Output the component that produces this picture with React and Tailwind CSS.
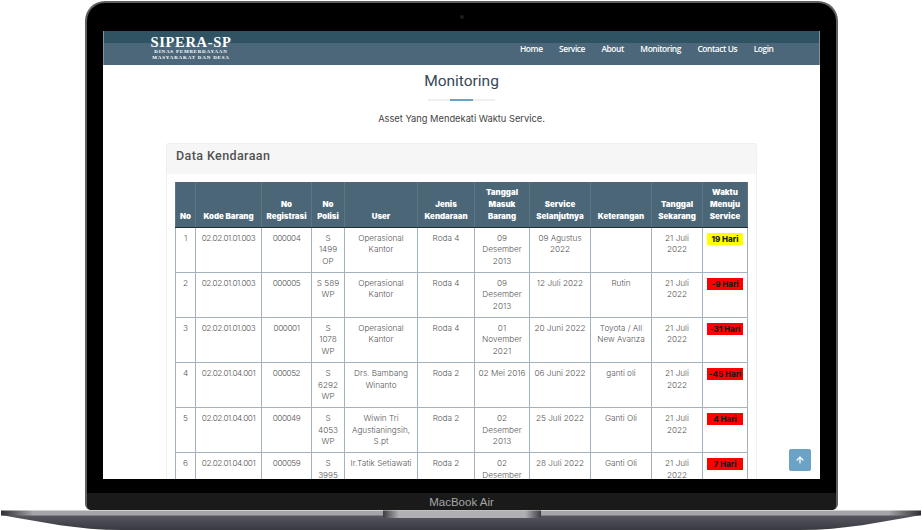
import React from 'react';
import { ArrowUp } from 'lucide-react';

const columns = [
  { label: ['No'], width: 'w-[20px]' },
  { label: ['Kode Barang'], width: 'w-[66px]' },
  { label: ['No', 'Registrasi'], width: 'w-[50px]' },
  { label: ['No', 'Polisi'], width: 'w-[33px]' },
  { label: ['User'], width: 'w-[73px]' },
  { label: ['Jenis', 'Kendaraan'], width: 'w-[57px]' },
  { label: ['Tanggal', 'Masuk', 'Barang'], width: 'w-[55px]' },
  { label: ['Service', 'Selanjutnya'], width: 'w-[61px]' },
  { label: ['Keterangan'], width: 'w-[61px]' },
  { label: ['Tanggal', 'Sekarang'], width: 'w-[51px]' },
  { label: ['Waktu', 'Menuju', 'Service'], width: 'w-[45px]' },
];

const rows = [
  ['1', '02.02.01.01.003', '000004', ['S', '1499', 'OP'], ['Operasional', 'Kantor'], 'Roda 4', ['09', 'Desember', '2013'], ['09 Agustus', '2022'], [''], '19 Hari'],
  ['2', '02.02.01.01.003', '000005', ['S 589', 'WP'], ['Operasional', 'Kantor'], 'Roda 4', ['09', 'Desember', '2013'], ['12 Juli 2022'], ['Rutin'], '-9 Hari'],
  ['3', '02.02.01.01.003', '000001', ['S', '1078', 'WP'], ['Operasional', 'Kantor'], 'Roda 4', ['01', 'November', '2021'], ['20 Juni 2022'], ['Toyota / All', 'New Avanza'], '-31 Hari'],
  ['4', '02.02.01.04.001', '000052', ['S', '6292', 'WP'], ['Drs. Bambang', 'Winanto'], 'Roda 2', ['02 Mei 2016'], ['06 Juni 2022'], ['ganti oli'], '-45 Hari'],
  ['5', '02.02.01.04.001', '000049', ['S', '4053', 'WP'], ['Wiwin Tri', 'Agustianingsih,', 'S.pt'], 'Roda 2', ['02', 'Desember', '2013'], ['25 Juli 2022'], ['Ganti Oli'], '4 Hari'],
  ['6', '02.02.01.04.001', '000059', ['S', '3995', 'WP'], ['Ir.Tatik Setiawati'], 'Roda 2', ['02', 'Desember', '2013'], ['28 Juli 2022'], ['Ganti Oli'], '7 Hari'],
];

const navItems = ['Home', 'Service', 'About', 'Monitoring', 'Contact Us', 'Login'];

const Lines = ({ items }) => items.map((line, i) => <div key={i} className="whitespace-nowrap">{line}</div>);

const Cell = ({ children, tight }) => (
  <td className={`border border-[#a3b3bf] px-0 pt-[5px] pb-[4px] align-top text-center ${tight ? 'tracking-[-0.45px]' : ''}`}>{children}</td>
);

const Badge = ({ text }) => (
  <span className={`inline-block w-[36px] h-[12px] leading-[12px] font-extrabold text-[8px] text-[#1a1a1a] whitespace-nowrap ${text === '19 Hari' ? 'bg-[#ffff00]' : 'bg-[#ff0000]'}`}>
    {text}
  </span>
);

const DataTable = () => (
  <table className="table-fixed border-collapse w-[572px] font-['Inter',sans-serif] font-light text-[8.2px] leading-[11.7px] text-[#555]">
    <thead>
      <tr className="h-[45px] bg-[#4b6677] text-white">
        {columns.map((col, i) => (
          <th key={i} className={`${col.width} border-x border-[#5d7686] border-b border-b-[#1f2d36] px-0 pb-[4px] align-bottom text-center font-black text-[7.9px] leading-[11.7px]`}>
            <Lines items={col.label} />
          </th>
        ))}
      </tr>
    </thead>
    <tbody>
      {rows.map((row) => (
        <tr key={row[0]} className="h-[45px]">
          <Cell>{row[0]}</Cell>
          <Cell tight>{row[1]}</Cell>
          <Cell tight>{row[2]}</Cell>
          <Cell><Lines items={row[3]} /></Cell>
          <Cell><Lines items={row[4]} /></Cell>
          <Cell>{row[5]}</Cell>
          <Cell><Lines items={row[6]} /></Cell>
          <Cell><Lines items={row[7]} /></Cell>
          <Cell><Lines items={row[8]} /></Cell>
          <Cell><Lines items={['21 Juli', '2022']} /></Cell>
          <Cell><Badge text={row[9]} /></Cell>
        </tr>
      ))}
    </tbody>
  </table>
);

const Navbar = () => (
  <header className="shrink-0 h-[34px] bg-[#4b6779] border-x border-[#7c929f] relative">
    <div className="h-[12px] bg-[#2f5362]" />
    <div className="absolute inset-0 flex items-start pl-[46px]">
      <div className="w-[82px] pt-[5px] text-white text-center font-['Liberation_Serif',serif] font-bold">
        <div className="text-[14.5px] leading-[13px] tracking-[0.7px] whitespace-nowrap">SIPERA-SP</div>
        <div className="text-[5px] leading-[6px] tracking-[0.8px] whitespace-nowrap">DINAS PEMBERDAYAAN</div>
        <div className="text-[5px] leading-[5.5px] tracking-[0.8px] whitespace-nowrap">MASYARAKAT DAN DESA</div>
      </div>
      <nav className="flex gap-[16.5px] ml-[288px] pt-[12px] text-white font-['Open_Sans',sans-serif] font-semibold text-[8.4px] leading-[12px] tracking-[-0.42px]">
        {navItems.map((item) => <span key={item} className="whitespace-nowrap">{item}</span>)}
      </nav>
    </div>
  </header>
);

const Screen = () => (
  <div className="h-[448px] bg-white overflow-hidden relative flex flex-col">
    <Navbar />
    <main className="flex flex-col items-center">
      <h1 className="mt-[6px] font-['Roboto',sans-serif] text-[15.5px] leading-[20px] text-[#38475a]">Monitoring</h1>
      <div className="mt-[8px] w-[67px] h-[2px] bg-[#f0f0f0] flex justify-center">
        <div className="w-[23px] h-[2px] bg-[#6ba3c6]" />
      </div>
      <p className="mt-[11px] font-['Inter',sans-serif] text-[9.3px] leading-[14px] text-[#444]">Asset Yang Mendekati Waktu Service.</p>
      <section className="mt-[17px] w-[591px] border border-[#f0f0f0] rounded-[2px]">
        <div className="h-[30px] bg-[#f6f6f6] pl-[9px] pb-[6px] flex items-center font-['Roboto',sans-serif] font-medium text-[12.5px] tracking-[0.4px] text-[#515151]">
          Data Kendaraan
        </div>
        <div className="pt-[8px] pl-[8px]">
          <DataTable />
        </div>
      </section>
    </main>
    <button className="absolute right-[9px] bottom-[8px] w-[22px] h-[22px] rounded-[2px] bg-[#6ba3c6] flex items-center justify-center text-white">
      <ArrowUp size={10} strokeWidth={3} />
    </button>
  </div>
);

const LaptopBase = () => (
  <svg viewBox="0 0 922 20" className="block w-[922px] h-[20px]">
    <defs>
      <linearGradient id="body" x1="0" y1="0" x2="0" y2="1">
        <stop offset="0.25" stopColor="#56575e" />
        <stop offset="1" stopColor="#383941" />
      </linearGradient>
      <linearGradient id="lip" x1="0" y1="0" x2="1" y2="0">
        <stop offset="0" stopColor="#2e2e32" />
        <stop offset="0.012" stopColor="#55555a" />
        <stop offset="0.035" stopColor="#a5a5a9" />
        <stop offset="0.965" stopColor="#a5a5a9" />
        <stop offset="0.988" stopColor="#55555a" />
        <stop offset="1" stopColor="#2e2e32" />
      </linearGradient>
      <linearGradient id="notch" x1="0" y1="0" x2="1" y2="0">
        <stop offset="0" stopColor="#3c3c42" />
        <stop offset="0.1" stopColor="#b0b0b4" />
        <stop offset="0.9" stopColor="#b0b0b4" />
        <stop offset="1" stopColor="#3c3c42" />
      </linearGradient>
    </defs>
    <path d="M1 1 H921 V5 C880 12 845 20 800 20 H122 C77 20 42 12 1 5 Z" fill="url(#body)" />
    <rect x="1" y="0.5" width="920" height="5" fill="url(#lip)" />
    <path d="M383 0.5 H541 V6 C541 7.5 540 8 538 8 H386 C384 8 383 7.5 383 6 Z" fill="url(#notch)" />
  </svg>
);

const App = () => (
  <div className="w-[922px] h-[530px] bg-white overflow-hidden flex flex-col">
    <div className="ml-[85px] mt-[1px] w-[753px] h-[509px] rounded-t-[20px] rounded-b-[6px] bg-black border-x-2 border-t-2 border-[#5f5f63] flex flex-col">
      <div className="h-[28px] flex items-center justify-center">
        <div className="w-[4px] h-[4px] rounded-full bg-[#1c1c1e]" />
      </div>
      <div className="mx-[16px]">
        <Screen />
      </div>
      <div className="h-[14px]" />
      <div className="flex-1 bg-[#1a1a1a] rounded-b-[5px] flex items-center justify-center font-['Liberation_Sans',sans-serif] text-[11.5px] leading-[14px] text-[#a6a6a6]">
        MacBook Air
      </div>
    </div>
    <LaptopBase />
  </div>
);

export default App;
